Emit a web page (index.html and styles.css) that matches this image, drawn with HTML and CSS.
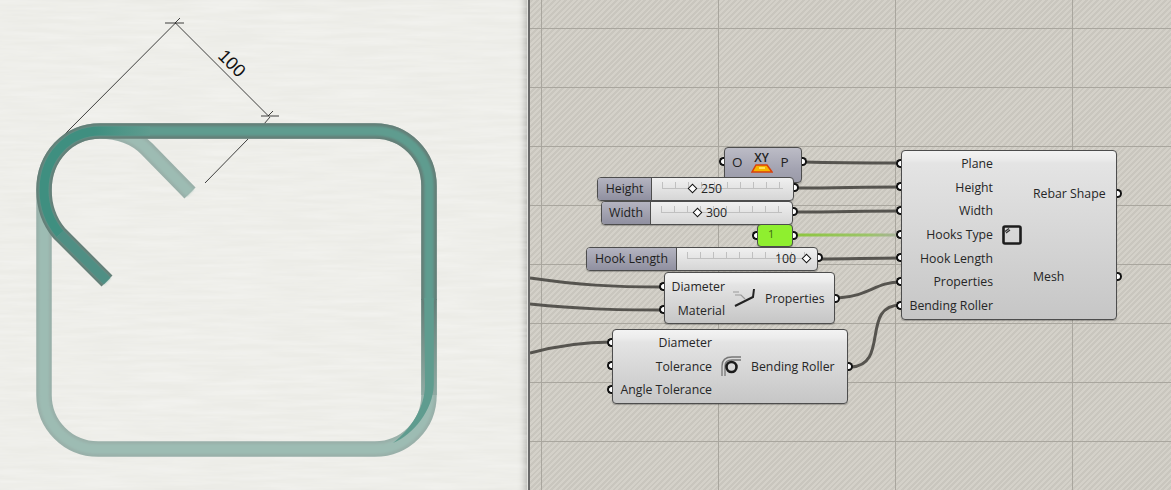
FILE: index.html
```html
<!DOCTYPE html>
<html lang="en">
<head>
    <meta charset="UTF-8">
    <title>Rebar Shape</title>
    <link rel="stylesheet" href="styles.css">
</head>
<body>
    <div class="view">
        <svg class="model" viewBox="0 0 527 490" width="527" height="490">
            <defs>
                <filter id="paper" x="0" y="0" width="100%" height="100%">
                    <feTurbulence type="fractalNoise" baseFrequency="0.015 0.2" numOctaves="3" seed="4"/>
                    <feColorMatrix type="matrix" values="0 0 0 0 1  0 0 0 0 1  0 0 0 0 1  0.5 0 0 0 -0.14"/>
                </filter>
                <filter id="soft"><feGaussianBlur stdDeviation="1"/></filter>
                <linearGradient id="darkfade" gradientUnits="userSpaceOnUse" x1="95" x2="150" y1="0" y2="0">
                    <stop offset="0" stop-color="#3f8f80"/>
                    <stop offset="1" stop-color="#5f9c8f"/>
                </linearGradient>
                <linearGradient id="edgefade" gradientUnits="userSpaceOnUse" x1="0" x2="0" y1="300" y2="395">
                    <stop offset="0" stop-color="#647f78"/>
                    <stop offset="1" stop-color="#8fa9a2"/>
                </linearGradient>
            </defs>
            <rect width="527" height="490" filter="url(#paper)"/>

            <!-- dimension -->
            <g class="dim">
                <path d="M175.500 23 L268 115.500"/>
                <path d="M175.500 23 L63 136"/>
                <path d="M248 139 L205 183"/>
                <path d="M264 124 L270 117"/>
                <path d="M165 23 H184 M175 23 L180 18"/>
                <path d="M261 116 H279 M268 116 L273 111"/>
            </g>
            <text class="dimtext" transform="translate(217 57) rotate(45)">100</text>

            <!-- back bar, lighter -->
            <g class="bar">
                <path class="back-edge" d="M190 193 L147 149 C135 137 118 131 100 131 C68 131 44 157 44 190 V395 C44 425 68 449 98 449 H375 C405 449 429 425 429 395 V186 C429 155 405 131 375 131 H100"/>
                <path class="back-core" filter="url(#soft)" d="M190 193 L147 149 C135 137 118 131 100 131 C68 131 44 157 44 190 V395 C44 425 68 449 98 449 H375 C405 449 429 425 429 395 V186 C429 155 405 131 375 131 H100"/>
            </g>
            <!-- front bar, darker -->
            <g class="bar">
                <path class="front-edge" d="M107 281 L59 233 C50 222 44 208 44 190 C44 157 68 131 100 131 H375 C405 131 429 155 429 186 V300"/>
                <path class="edge-fade" d="M429 299 V395"/>
                <path class="front-core" filter="url(#soft)" d="M107 281 L59 233 C50 222 44 208 44 190 C44 157 68 131 100 131 H375 C405 131 429 155 429 186 V300"/>
                <path class="front-dark" d="M60 234 C50 222 44 208 44 190 C44 157 68 131 100 131 H150"/>
                <path class="front-hook" d="M107 281 L60 234"/>
                <path class="front-tip" d="M424.200 298 L425 385 C425 408 410 430 393 443 C413 435 433 410 433.800 385 L433.800 298 Z"/>
            </g>
        </svg>
    </div>

    <div class="canvas">
        <svg class="wires" viewBox="530 0 641 490" width="641" height="490">
            <defs>
                <linearGradient id="greenwire" x1="0" x2="1" y1="0" y2="0">
                    <stop offset="0" stop-color="#8dc63f"/>
                    <stop offset="0.7" stop-color="#9cc46a"/>
                    <stop offset="1" stop-color="#a9aea0"/>
                </linearGradient>
            </defs>
            <path d="M530 278 C580 285 610 287 664 287"/>
            <path d="M530 304 C580 309 610 310 664 310"/>
            <path d="M530 353 C560 345 585 342 612 342"/>
            <path d="M804 162 C840 163 870 163 901 163"/>
            <path d="M796 188 C840 188 860 187 901 187"/>
            <path d="M795 212 C840 212 860 211 901 211"/>
            <path d="M820 259 C850 259 870 258 901 258"/>
            <path d="M838 298 C870 296 875 282 901 282"/>
            <path d="M851 367 C890 365 860 305 901 305"/>
            <rect class="greenwire" x="795" y="233.500" width="106" height="3"/>
        </svg>

        <div class="node plane-node">
            <span class="port in"></span>
            <span class="port out"></span>
            <span class="plane-o">O</span>
            <span class="plane-icon">
                <span class="xy">XY</span>
                <svg viewBox="0 0 22 9" width="22" height="9"><path d="M5 1 H16 L21 8 H1 Z" fill="#f7b500" stroke="#d8400c" stroke-width="1.500"/><path d="M8 4 H14" stroke="#ffe15a" stroke-width="2"/></svg>
            </span>
            <span class="plane-p">P</span>
        </div>

        <div class="slider height-slider">
            <span class="port out"></span>
            <span class="slider-label">Height</span>
            <span class="slider-track track-height">
                <span class="ticks"></span>
                <span class="diamond"></span>
                <span class="value">250</span>
            </span>
        </div>

        <div class="slider width-slider">
            <span class="port out"></span>
            <span class="slider-label">Width</span>
            <span class="slider-track track-width">
                <span class="ticks"></span>
                <span class="diamond"></span>
                <span class="value">300</span>
            </span>
        </div>

        <div class="panel">
            <span class="port in"></span>
            <span class="port out"></span>
            1
        </div>

        <div class="slider hook-slider">
            <span class="port out"></span>
            <span class="slider-label">Hook Length</span>
            <span class="slider-track track-hook">
                <span class="ticks"></span>
                <span class="value">100</span>
                <span class="diamond"></span>
            </span>
        </div>

        <div class="node props-node">
            <div class="inputs">
                <div class="row"><span class="port in"></span>Diameter</div>
                <div class="row"><span class="port in"></span>Material</div>
            </div>
            <svg class="icon" viewBox="0 0 22 20" width="22" height="20">
                <path d="M2 18 L20 9 L21 1" fill="none" stroke="#222" stroke-width="2"/>
                <path d="M0 4 H6 M2 7 H8 L12 11" fill="none" stroke="#999" stroke-width="1.200"/>
            </svg>
            <div class="outputs">
                <div class="row">Properties<span class="port out"></span></div>
            </div>
        </div>

        <div class="node roller-node">
            <div class="inputs">
                <div class="row"><span class="port in"></span>Diameter</div>
                <div class="row"><span class="port in"></span>Tolerance</div>
                <div class="row"><span class="port in"></span>Angle Tolerance</div>
            </div>
            <svg class="icon" viewBox="0 0 20 20" width="20" height="20">
                <path d="M1 20 V10 C1 4 5 1 11 1 H20 M4 20 V10 C4 6 7 4 11 4 H20" fill="none" stroke="#777" stroke-width="1.300"/>
                <circle cx="10.500" cy="11" r="5" fill="none" stroke="#1c1c1c" stroke-width="2.600"/>
            </svg>
            <div class="outputs">
                <div class="row">Bending Roller<span class="port out"></span></div>
            </div>
        </div>

        <div class="node main-node">
            <div class="inputs">
                <div class="row"><span class="port in"></span>Plane</div>
                <div class="row"><span class="port in"></span>Height</div>
                <div class="row"><span class="port in"></span>Width</div>
                <div class="row"><span class="port in"></span>Hooks Type</div>
                <div class="row"><span class="port in"></span>Hook Length</div>
                <div class="row"><span class="port in"></span>Properties</div>
                <div class="row"><span class="port in"></span>Bending Roller</div>
            </div>
            <svg class="icon" viewBox="0 0 20 20" width="20" height="20">
                <rect x="1.500" y="1.500" width="17" height="17" rx="1.500" fill="none" stroke="#1c1c1c" stroke-width="2.600"/>
                <path d="M3 6.500 L7 3.500 M4 8 L8 5" stroke="#333" stroke-width="1.300"/>
            </svg>
            <div class="outputs">
                <div class="row">Rebar Shape<span class="port out"></span></div>
                <div class="row">Mesh<span class="port out"></span></div>
            </div>
        </div>
    </div>
</body>
</html>
```

FILE: styles.css
```css
body {
    margin: 0;
    width: 1171px;
    height: 490px;
    overflow: hidden;
    display: flex;
    font-family: "Open Sans", "Noto Sans", sans-serif;
    font-size: 12.3px;
    color: #262626;
}

.view {
    width: 527px;
    height: 490px;
    flex: none;
    background-color: #ecece7;
    box-shadow: inset -8px 0 7px -6px rgba(0, 0, 0, 0.28);
}
.model {
    display: block;
}
.dim path {
    fill: none;
    stroke: #111;
    stroke-width: 1;
    stroke-opacity: 0.8;
}
.dimtext {
    font-family: "Liberation Sans", sans-serif;
    font-size: 18px;
    fill: #111;
}
.bar path {
    fill: none;
    stroke-linecap: butt;
}
.back-edge {
    stroke: #8fa9a2;
    stroke-width: 15.5;
    stroke-opacity: 0.9;
}
.back-core {
    stroke: #9dbcb3;
    stroke-width: 10;
}
.front-edge,
.edge-fade {
    stroke: #647f78;
    stroke-width: 15.5;
}
.bar .edge-fade {
    stroke: url(#edgefade);
}
.front-core {
    stroke: #5f9c8f;
    stroke-width: 9.5;
}
.bar .front-dark {
    stroke: url(#darkfade);
    stroke-width: 9;
}
.bar .front-hook {
    stroke: #4f8f84;
    stroke-width: 9;
}
.bar .front-tip {
    fill: #5f9c8f;
}

.canvas {
    position: relative;
    flex: 1;
    height: 490px;
    border-left: 1px solid #e4e4e0;
    box-sizing: border-box;
    box-shadow: inset 2px 0 0 #6a6a6a;
    background-color: #cfccc4;
    background-image:
        linear-gradient(90deg, #a9a69e 1px, transparent 1px),
        linear-gradient(#a9a69e 1px, transparent 1px),
        repeating-linear-gradient(135deg, #d4d1c9 0, #d4d1c9 2px, #c9c6be 2px, #c9c6be 4px);
    background-size: 177px 100%, 100% 59px, auto;
    background-position: 13px 0, 0 28px, 0 0;
}
.wires {
    position: absolute;
    left: 2px;
    top: 0;
}
.wires path {
    fill: none;
    stroke: #56544f;
    stroke-width: 3;
}
.wires .greenwire {
    fill: url(#greenwire);
}

/* nodes sit on a free canvas, left = screen x - 528 */
.node,
.slider,
.panel {
    position: absolute;
    box-sizing: border-box;
    border: 1px solid #4d4d4d;
    border-radius: 4px;
    box-shadow: 0 1px 1px rgba(0, 0, 0, 0.25);
}
.node {
    display: flex;
    background: linear-gradient(#f3f3f3 0, #ececec 8px, #e4e4e4 12px, #c6c6c6 100%);
}
.inputs,
.outputs {
    display: flex;
    flex-direction: column;
}
.inputs {
    flex: none;
    box-sizing: border-box;
    text-align: right;
}
.outputs {
    flex: 1;
    justify-content: space-around;
    padding-left: 10px;
}
.row {
    position: relative;
    line-height: 23.67px;
    height: 23.67px;
    white-space: nowrap;
}
.icon {
    flex: none;
    display: block;
    margin-left: 9px;
}

.port {
    position: absolute;
    top: 50%;
    margin-top: -5px;
    width: 3px;
    height: 5px;
    background: #fff;
    border: 2.500px solid #111;
}
.port.in {
    left: -6.500px;
    border-right: 0;
    border-radius: 5px 0 0 5px;
}
.port.out {
    left: calc(100% + 1px);
    border-left: 0;
    border-radius: 0 5px 5px 0;
}

.main-node {
    left: 373px;
    top: 150px;
    width: 216px;
    height: 170px;
    padding-top: 1px;
}
.main-node .inputs {
    width: 91px;
}
.main-node .icon {
    margin-top: 73px;
}
.main-node .outputs {
    padding-left: 11px;
}

.props-node {
    left: 136px;
    top: 272px;
    width: 171px;
    height: 52px;
    padding-top: 2px;
}
.props-node .inputs {
    width: 60px;
}
.props-node .icon {
    margin-top: 13px;
    margin-left: 8px;
}

.roller-node {
    left: 84px;
    top: 329px;
    width: 236px;
    height: 75px;
    padding-top: 1px;
}
.roller-node .inputs {
    width: 99px;
}
.roller-node .icon {
    margin-top: 25px;
}

.plane-node {
    left: 196px;
    top: 147px;
    width: 78px;
    height: 36px;
    background: linear-gradient(#bcbcc6, #a4a4b2 60%, #9a9aa8);
    padding: 3px 7px 0 7px;
    gap: 8px;
    color: #222;
}
.plane-node .port {
    top: 9px;
    margin-top: 0;
}
.plane-o,
.plane-p {
    line-height: 22px;
    font-size: 13.5px;
}
.plane-icon {
    display: flex;
    flex-direction: column;
    align-items: center;
    width: 22px;
}
.plane-icon svg {
    display: block;
}
.xy {
    font-size: 12px;
    font-weight: 600;
    line-height: 13px;
}

.slider {
    display: flex;
    height: 24px;
    background: linear-gradient(#f0f0f0, #d6d6d6);
}
.slider .port.out {
    left: 100%;
    margin-left: 1px;
    margin-top: -6px;
}
.slider-label {
    flex: none;
    box-sizing: border-box;
    line-height: 22px;
    text-align: center;
    border-radius: 3px 0 0 3px;
    border-right: 1px solid #4d4d4d;
    background: linear-gradient(#b4b4c0, #9090a0);
    color: #1e1e1e;
}
.slider-track {
    position: relative;
    flex: 1;
    display: block;
}
.ticks {
    position: absolute;
    left: 10px;
    right: 10px;
    top: 4px;
    height: 6px;
    border-bottom: 1px solid #c0c0c0;
    background-image: linear-gradient(90deg, #c0c0c0 1px, transparent 1px);
    background-size: 13px 100%;
}
.diamond {
    position: absolute;
    top: 7px;
    width: 5px;
    height: 5px;
    background: #fff;
    border: 1.500px solid #111;
    transform: rotate(45deg);
}
.value {
    position: absolute;
    top: 0;
    line-height: 22px;
}

.height-slider {
    left: 69px;
    top: 177px;
    width: 197px;
}
.height-slider .slider-label {
    width: 54px;
}
.track-height .diamond {
    left: 37px;
}
.track-height .value {
    left: 49px;
}

.width-slider {
    left: 73px;
    top: 201px;
    width: 192px;
}
.width-slider .slider-label {
    width: 49px;
}
.track-width .diamond {
    left: 43px;
}
.track-width .value {
    left: 55px;
}

.hook-slider {
    left: 58px;
    top: 247px;
    width: 232px;
}
.hook-slider .slider-label {
    width: 90px;
}
.track-hook .value {
    left: 98px;
}
.track-hook .diamond {
    left: 126px;
}

.panel {
    left: 229px;
    top: 224px;
    width: 36px;
    height: 23px;
    background: #8fef2f;
    color: #3f6b12;
    font-size: 11px;
    line-height: 17px;
    padding-left: 10px;
}
.panel .port {
    top: 6px;
    margin-top: 0;
}
.panel .port.out {
    left: 35px;
}
```
